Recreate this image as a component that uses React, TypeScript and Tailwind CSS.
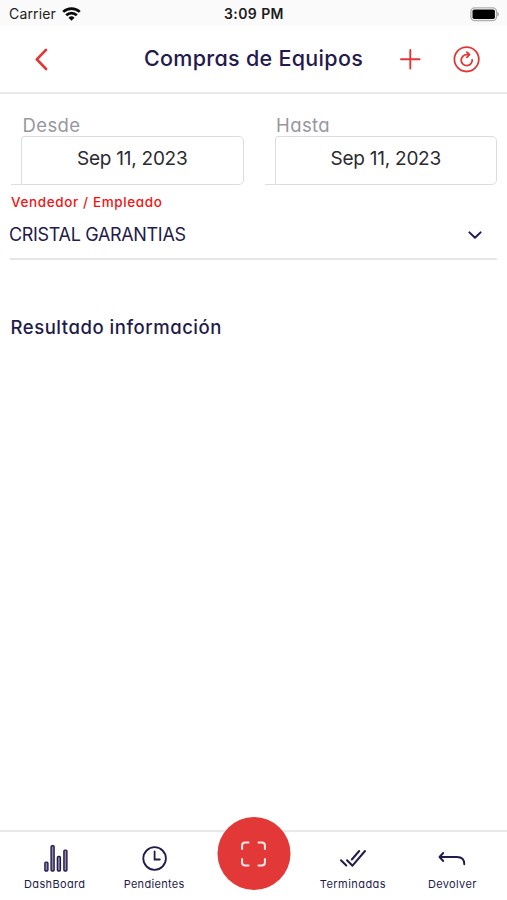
import React from "react";

interface DateFieldProps {
  label: string;
  value: string;
}

interface TabItem {
  title: string;
  spacing: string;
  icon: React.ReactNode;
}

const DateField: React.FC<DateFieldProps> = ({ label, value }) => (
  <div className="flex-1 pl-[11px] pr-[10px]">
    <label className="block h-[22px] pl-[11.5px] text-[18.5px] leading-[22px] tracking-[0.4px] text-[#97979f]">
      {label}
    </label>
    <div className="flex items-end">
      <span className="h-px w-[10px] bg-[#dcdde0]" />
      <div className="flex h-[49px] flex-1 items-center justify-center rounded-r-[5px] rounded-tl-[3px] border-[1.5px] border-[#dcdde0] pb-[2px] text-[19px] tracking-[-0.25px] text-[#2b2b30]">
        {value}
      </div>
    </div>
  </div>
);

const tabs: TabItem[] = [
  {
    title: "DashBoard",
    spacing: "tracking-[0.35px]",
    icon: (
      <svg width="28" height="32" viewBox="0 0 28 32" fill="#8d87a3" stroke="#241a4b" strokeWidth="1.4">
        <rect x="3.9" y="20.1" width="3" height="8.9" rx="1" />
        <rect x="10.1" y="3.7" width="3" height="25.3" rx="1" />
        <rect x="16.4" y="14.5" width="3" height="14.5" rx="1" />
        <rect x="22.9" y="8.1" width="3" height="20.9" rx="1" />
      </svg>
    ),
  },
  {
    title: "Pendientes",
    spacing: "tracking-[0.3px]",
    icon: (
      <svg width="28" height="32" viewBox="0 0 28 32" fill="none" stroke="#241a4b" strokeWidth="1.8" strokeLinecap="round">
        <circle cx="14.6" cy="16.5" r="11.3" />
        <path d="M14.6 9.5v8h5.2" />
      </svg>
    ),
  },
  { title: "", spacing: "", icon: null },
  {
    title: "Terminadas",
    spacing: "tracking-[0.45px]",
    icon: (
      <svg width="28" height="32" viewBox="0 0 28 32" fill="none" stroke="#241a4b" strokeWidth="2" strokeLinecap="round" strokeLinejoin="round">
        <path d="M2 18.2l5.3 5.3M8 18.2l5.5 5.5L26 9M20.2 9L12.8 17.5" />
      </svg>
    ),
  },
  {
    title: "Devolver",
    spacing: "tracking-[0.35px]",
    icon: (
      <svg width="28" height="32" viewBox="0 0 28 32" fill="none" stroke="#241a4b" strokeWidth="1.9" strokeLinecap="round" strokeLinejoin="round">
        <path d="M5.2 11l-3.7 4 3.7 4M2 15h17q7.3 0 7.3 7.3" />
      </svg>
    ),
  },
];

const StatusBar: React.FC = () => (
  <div className="grid h-[26px] grid-cols-3 items-center bg-[#fafafa] pl-[9px] pr-[8px] pt-[2px] text-[14px] leading-5 text-[#1c1c1c] [font-feature-settings:normal]">
    <div className="flex items-center gap-[6px]">
      <span className="tracking-[0.15px]">Carrier</span>
      <svg width="19" height="14" viewBox="0 0 19 14" fill="none" stroke="#0a0a0a" strokeWidth="2.7">
        <path d="M1.2 4.9a12 12 0 0 1 16.6 0M4.2 8.3a7.6 7.6 0 0 1 10.6 0" />
        <path d="M9.5 13.8L6.5 10.7a4.4 4.4 0 0 1 6 0z" fill="#0a0a0a" stroke="none" />
      </svg>
    </div>
    <span className="text-center font-semibold tracking-[0.4px]">3:09 PM</span>
    <svg className="justify-self-end" width="29" height="15" viewBox="0 0 29 15">
      <rect x="0.9" y="0.9" width="25.6" height="12.6" rx="3.8" fill="#fff" stroke="#b0b0b0" strokeWidth="1.4" />
      <rect x="2.5" y="2.4" width="22.4" height="9.6" rx="1.8" fill="#000" />
      <path d="M27.2 4.8v4.8q1.8-.8 1.8-2.4t-1.8-2.4z" fill="#b0b0b0" />
    </svg>
  </div>
);

const App: React.FC = () => {
  return (
    <main className="flex h-screen w-full flex-col overflow-hidden bg-white font-['Inter','Open_Sans',sans-serif] text-[#241a4b] [font-feature-settings:'cv11']">
      <StatusBar />

      {/* Header */}
      <header className="flex h-[68px] items-center border-b-2 border-[#e8e8ec] pl-[33px] pr-[26px]">
        <button aria-label="Volver">
          <svg width="18" height="26" viewBox="0 0 18 26" fill="none" stroke="#e23636" strokeWidth="2.8" strokeLinecap="round" strokeLinejoin="round">
            <path d="M13 3.9L3.8 13.4l9.2 9.5" />
          </svg>
        </button>
        <h1 className="flex-1 pb-px pl-[57px] text-center text-[21.5px] font-medium tracking-[0.3px]">
          Compras de Equipos
        </h1>
        <button aria-label="Agregar" className="mr-[32px]">
          <svg width="22" height="22" viewBox="0 0 22 22" fill="none" stroke="#e23636" strokeWidth="1.9" strokeLinecap="round">
            <path d="M11.3 2v18.6M2 11.3h18.6" />
          </svg>
        </button>
        <button aria-label="Actualizar">
          <svg width="28" height="28" viewBox="0 0 28 28" fill="none" stroke="#e23636" strokeWidth="1.8" strokeLinecap="round" strokeLinejoin="round">
            <circle cx="13.6" cy="14.3" r="12.2" />
            <path d="M19.2 14.9A5.5 5.5 0 1 1 13.7 9.7h2.4" />
            <path d="M13.9 7.1l2.6 2.6-2.6 2.6" />
          </svg>
        </button>
      </header>

      {/* Filters */}
      <section className="flex pt-[20px]">
        <DateField label="Desde" value="Sep 11, 2023" />
        <DateField label="Hasta" value="Sep 11, 2023" />
      </section>

      <section className="mx-[10px]">
        <p className="mt-[8px] h-[18px] pl-[1px] text-[13.5px] font-medium leading-[18px] tracking-[0.62px] text-[#f01414]">
          Vendedor / Empleado
        </p>
        <div className="flex h-[49px] items-center justify-between border-b-2 border-[#e6e6e8] pr-[14px]">
          <span className="-ml-px text-[18px] tracking-[-0.33px]">CRISTAL GARANTIAS</span>
          <svg width="16" height="10" viewBox="0 0 16 10" fill="none" stroke="#241a4b" strokeWidth="2" strokeLinecap="round" strokeLinejoin="round">
            <path d="M2.4 2.4L8 7.8l5.6-5.4" />
          </svg>
        </div>
      </section>

      <h2 className="mt-[53px] pl-[10.5px] text-[18.5px] font-medium leading-7 tracking-[0.54px]">
        Resultado información
      </h2>

      {/* Bottom tabs */}
      <nav className="relative mt-auto grid h-[70px] grid-cols-5 border-t-2 border-[#e9e9eb] px-[5px]">
        {tabs.map((tab, i) => (
          <div key={i} className="flex flex-col items-center pt-[10px]">
            {tab.icon}
            <span className={`mt-[2px] text-[11px] leading-4 ${tab.spacing}`}>{tab.title}</span>
          </div>
        ))}
        <button
          aria-label="Escanear"
          className="absolute -top-[15px] left-1/2 flex h-[73px] w-[73px] -translate-x-1/2 items-center justify-center rounded-full bg-[#e33838]"
        >
          <svg width="26" height="26" viewBox="0 0 26 26" fill="none" stroke="#ffeaea" strokeWidth="2" strokeLinecap="round">
            <path d="M1.6 8V4.6q0-3 3-3H8M18 1.6h3.4q3 0 3 3V8M24.4 18v3.4q0 3-3 3H18M8 24.4H4.6q-3 0-3-3V18" />
          </svg>
        </button>
      </nav>
    </main>
  );
};

export default App;
